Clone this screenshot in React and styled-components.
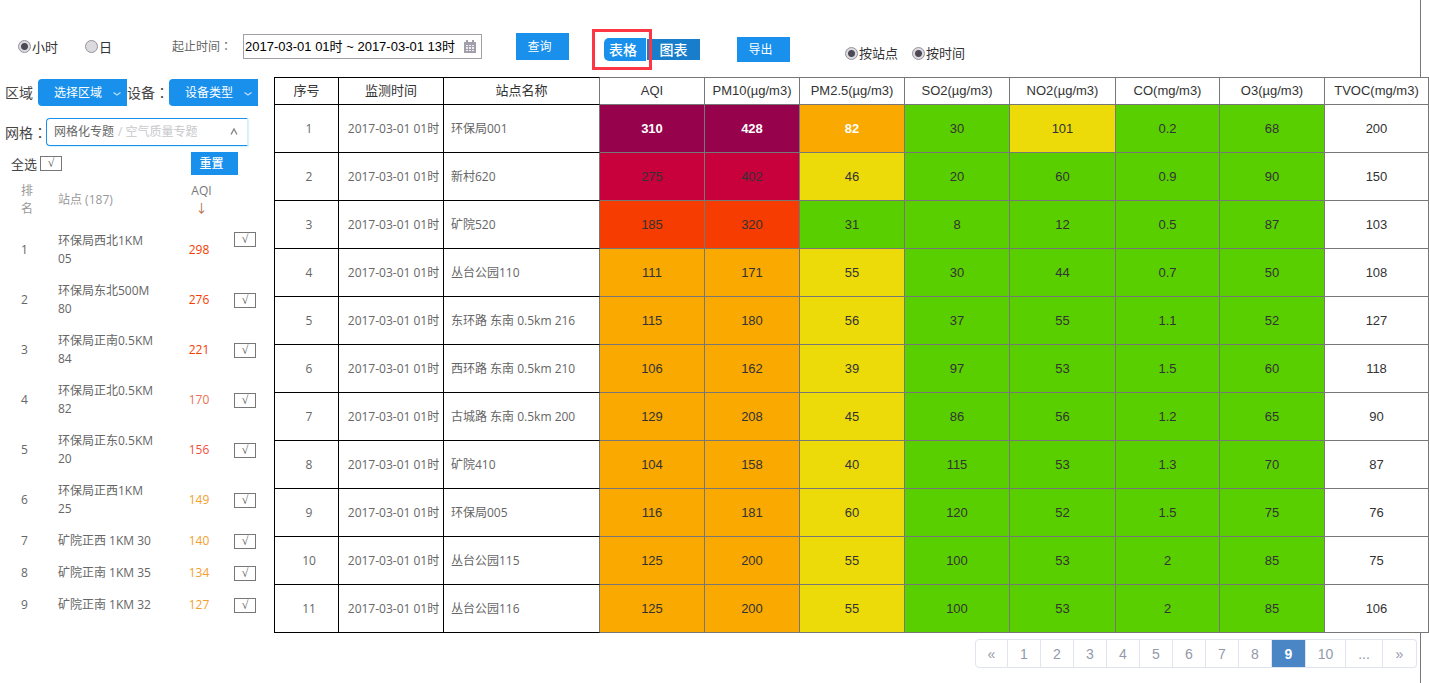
import React from 'react';
import styled, { createGlobalStyle } from 'styled-components';

const COLORS = {
    purple: '#96024b',
    crimson: '#c8003c',
    red: '#f63c00',
    orange: '#f9a900',
    yellow: '#ecdb09',
    green: '#5acf00',
    blue: '#1890ec',
};

const columns = [
    { name: '序号', width: 65 },
    { name: '监测时间', width: 105 },
    { name: '站点名称', width: 156 },
    { name: 'AQI', width: 105 },
    { name: 'PM10(µg/m3)', width: 95 },
    { name: 'PM2.5(µg/m3)', width: 105 },
    { name: 'SO2(µg/m3)', width: 105 },
    { name: 'NO2(µg/m3)', width: 106 },
    { name: 'CO(mg/m3)', width: 104 },
    { name: 'O3(µg/m3)', width: 105 },
    { name: 'TVOC(mg/m3)', width: 104 },
];

const records = [
    { site: '环保局001', values: [310, 428, 82, 30, 101, 0.2, 68, 200], levels: ['purple', 'purple', 'orange', 'green', 'yellow'] },
    { site: '新村620', values: [275, 402, 46, 20, 60, 0.9, 90, 150], levels: ['crimson', 'crimson', 'yellow'] },
    { site: '矿院520', values: [185, 320, 31, 8, 12, 0.5, 87, 103], levels: ['red', 'red', 'green'] },
    { site: '丛台公园110', values: [111, 171, 55, 30, 44, 0.7, 50, 108] },
    { site: '东环路 东南 0.5km 216', values: [115, 180, 56, 37, 55, 1.1, 52, 127] },
    { site: '西环路 东南 0.5km 210', values: [106, 162, 39, 97, 53, 1.5, 60, 118] },
    { site: '古城路 东南 0.5km 200', values: [129, 208, 45, 86, 56, 1.2, 65, 90] },
    { site: '矿院410', values: [104, 158, 40, 115, 53, 1.3, 70, 87] },
    { site: '环保局005', values: [116, 181, 60, 120, 52, 1.5, 75, 76] },
    { site: '丛台公园115', values: [125, 200, 55, 100, 53, 2, 85, 75] },
    { site: '丛台公园116', values: [125, 200, 55, 100, 53, 2, 85, 106] },
];

const defaultLevels = ['orange', 'orange', 'yellow', 'green', 'green', 'green', 'green'];

const ranking = [
    { name: '环保局西北1KM 05', aqi: 298, color: '#f63c00' },
    { name: '环保局东北500M 80', aqi: 276, color: '#f63c00' },
    { name: '环保局正南0.5KM 84', aqi: 221, color: '#f63c00' },
    { name: '环保局正北0.5KM 82', aqi: 170, color: '#ee6f52' },
    { name: '环保局正东0.5KM 20', aqi: 156, color: '#f2503c' },
    { name: '环保局正西1KM 25', aqi: 149, color: '#f2a02c' },
    { name: '矿院正西 1KM 30', aqi: 140, color: '#f2a02c' },
    { name: '矿院正南 1KM 35', aqi: 134, color: '#f2a02c' },
    { name: '矿院正南 1KM 32', aqi: 127, color: '#f2a02c' },
];

const pages = ['«', '1', '2', '3', '4', '5', '6', '7', '8', '9', '10', '...', '»'];
const pageWidths = { 9: 34, 10: 40, '...': 37, '»': 34 };

function Chevron({ up }){
    return (
        <svg width="8" height="8" viewBox="0 0 8 8" fill="none" stroke="currentColor" strokeWidth="1.4" aria-hidden="true">
            <path d={up ? 'M1 6.5L4 1L7 6.5' : 'M0.5 2.5L4 5L7.5 2.5'}/>
        </svg>
    )
}

function CalendarIcon(){
    return (
        <svg width="12" height="13" viewBox="0 0 12 13" aria-hidden="true">
            <path d="M0 2H12V13H0Z M2 0H4V3H2Z M8 0H10V3H8Z" fill="#a29fab"/>
            <path d="M2 5H10V11H2Z" fill="#efeef2"/>
            <path d="M2 6.5H10M2 9.5H10M4.5 5V11M7.5 5V11" stroke="#a29fab"/>
        </svg>
    )
}

function Tick({ label }){
    return (
        <TickStyled>
            <input type="checkbox" defaultChecked aria-label={label}/>
            <span>√</span>
        </TickStyled>
    )
}

function Toolbar(){
    return (
        <ToolbarStyled>
            <ToolGroup $height={35}>
                <RadioLabel $space={27}><input type="radio" name="unit" defaultChecked/>小时</RadioLabel>
                <RadioLabel $space={60}><input type="radio" name="unit"/>日</RadioLabel>
                <RangeLabel htmlFor="range">起止时间<Colon>：</Colon></RangeLabel>
                <RangeBox>
                    <input id="range" type="text" defaultValue="2017-03-01 01时 ~ 2017-03-01 13时"/>
                    <CalendarIcon/>
                </RangeBox>
                <Button $width={53} $height={27}>查询</Button>
            </ToolGroup>
            <ToolGroup $height={41}>
                <Highlight><ViewButton $active>表格</ViewButton></Highlight>
                <ViewButton>图表</ViewButton>
            </ToolGroup>
            <ToolGroup $height={41}>
                <Button $width={53} $height={25}>导出</Button>
            </ToolGroup>
            <ToolGroup $height={48}>
                <RadioLabel $space={14}><input type="radio" name="site" defaultChecked/>按站点</RadioLabel>
                <RadioLabel><input type="radio" name="time" defaultChecked/>按时间</RadioLabel>
            </ToolGroup>
        </ToolbarStyled>
    )
}

function Sidebar(){
    return (
        <SidebarStyled>
            <FilterRow>
                <FilterLabel $width={33} htmlFor="area">区域</FilterLabel>
                <Picker>
                    <select id="area"><option>选择区域</option></select>
                    <Chevron/>
                </Picker>
                <FilterLabel $width={42} htmlFor="device">设备<Colon>：</Colon></FilterLabel>
                <Picker>
                    <select id="device"><option>设备类型</option></select>
                    <Chevron/>
                </Picker>
            </FilterRow>
            <FilterRow>
                <FilterLabel $width={41} htmlFor="grid">网格<Colon>：</Colon></FilterLabel>
                <Cascader id="grid" type="button" aria-haspopup="listbox">
                    <span>网格化专题</span>
                    <em>/ 空气质量专题</em>
                    <Chevron up/>
                </Cascader>
            </FilterRow>
            <SelectAll>
                <span>全选</span>
                <Tick label="全选"/>
                <Button $width={47} $height={23}>重置</Button>
            </SelectAll>
            <RankTable>
                <colgroup>
                    <col width="58"/>
                    <col width="119"/>
                    <col width="44"/>
                    <col width="53"/>
                </colgroup>
                <thead>
                    <tr>
                        <th>排名</th>
                        <th>站点 (187)</th>
                        <SortCell>AQI<span>↓</span></SortCell>
                        <td/>
                    </tr>
                </thead>
                <tbody>
                    {ranking.map((item, i) => (
                        <tr key={item.name}>
                            <td>{i + 1}</td>
                            <td>{item.name}</td>
                            <AqiCell $color={item.color}>{item.aqi}</AqiCell>
                            <TickCell $top={i === 0}><Tick label={item.name}/></TickCell>
                        </tr>
                    ))}
                </tbody>
            </RankTable>
        </SidebarStyled>
    )
}

function DataGrid(){
    return (
        <GridTable>
            <colgroup>
                {columns.map(col => <col key={col.name} width={col.width}/>)}
            </colgroup>
            <thead>
                <tr>
                    {columns.map((col, i) => <HeadCell key={col.name} $index={i}>{col.name}</HeadCell>)}
                </tr>
            </thead>
            <tbody>
                {records.map((row, i) => (
                    <tr key={row.site}>
                        <InfoCell>{i + 1}</InfoCell>
                        <InfoCell>2017-03-01 01时</InfoCell>
                        <SiteCell>{row.site}</SiteCell>
                        {row.values.map((value, j) => (
                            <ValueCell
                                key={columns[j + 3].name}
                                $level={(row.levels && row.levels[j]) || defaultLevels[j]}
                                $plain={j === 7}
                                $strong={i === 0 && j < 3}
                            >
                                {value}
                            </ValueCell>
                        ))}
                    </tr>
                ))}
            </tbody>
        </GridTable>
    )
}

function App(){
    return (
        <Page>
            <GlobalStyle/>
            <Toolbar/>
            <Content>
                <Sidebar/>
                <Main>
                    <DataGrid/>
                    <Pagination aria-label="分页">
                        {pages.map(page => (
                            <PageButton key={page} $width={pageWidths[page] || 33} $active={page === '9'}>{page}</PageButton>
                        ))}
                    </Pagination>
                </Main>
            </Content>
        </Page>
    )
}

const GlobalStyle = createGlobalStyle`
    *{
        box-sizing: border-box;
    }
    body{
        margin: 0;
        background: #fff;
        color: #444;
        font-family: "Open Sans", "Noto Sans CJK SC", sans-serif;
        font-size: 12px;
        line-height: 18px;
    }
    button, input, select{
        font: inherit;
    }
    button{
        padding: 0;
        border: none;
        cursor: pointer;
    }
`;

const Page = styled.div`
    min-height: 100vh;
    margin-right: 8px;
    border-right: 1px solid #777;
`;

const ToolbarStyled = styled.div`
    display: flex;
    align-items: flex-start;
    height: 77px;
    padding: 29px 0 0 18px;
`;

const ToolGroup = styled.div`
    display: flex;
    align-items: center;
    height: ${props => props.$height}px;

    & + &{
        margin-left: 23px;
    }
    & + & + &{
        margin-left: 37px;
    }
    & + & + & + &{
        margin-left: 55px;
    }
`;

const RadioLabel = styled.label`
    display: flex;
    align-items: center;
    gap: 1px;
    margin-right: ${props => props.$space || 0}px;
    color: #333;
    font-size: 13px;

    input{
        appearance: none;
        width: 13px;
        height: 13px;
        margin: 0;
        border: 1px solid #94919b;
        border-radius: 50%;
        background: #dcdadf;
    }
    input:checked{
        background: radial-gradient(circle, #4c4955 0 3px, #dcdadf 4px);
    }
`;

/* the traditional face sets the full-width colon in the middle */
const Colon = styled.span`
    font-family: "Noto Sans CJK TC", sans-serif;
`;

const RangeLabel = styled.label`
    width: 71px;
    color: #666;
`;

const RangeBox = styled.div`
    display: flex;
    align-items: center;
    width: 239px;
    height: 25px;
    margin-right: 34px;
    padding-right: 5px;
    border: 1px solid #a29fab;

    input{
        flex: 1;
        min-width: 0;
        padding: 0 1px;
        border: none;
        outline: none;
        color: #000;
        font-family: "Liberation Sans", "Noto Sans CJK SC", sans-serif;
        font-size: 13px;
    }
`;

const Button = styled.button`
    width: ${props => props.$width}px;
    height: ${props => props.$height}px;
    padding-right: 6px;
    background: ${COLORS.blue};
    color: #fff;
`;

const Highlight = styled.div`
    position: relative;
    z-index: 1;
    display: flex;
    align-items: center;
    height: 41px;
    margin-right: -5px;
    padding: 0 3px 0 9px;
    border: 3px solid #fc3644;
`;

const ViewButton = styled.button`
    width: ${props => props.$active ? 42 : 53}px;
    height: ${props => props.$active ? 23 : 21}px;
    padding-right: ${props => props.$active ? 4 : 0}px;
    border-radius: ${props => props.$active ? '5px 0 0 5px' : 0};
    background: ${props => props.$active ? COLORS.blue : '#187dca'};
    color: #fff;
    font-size: 14px;
    font-weight: 500;
`;

const Content = styled.div`
    display: flex;
    align-items: flex-start;
`;

const SidebarStyled = styled.aside`
    flex: none;
    width: 274px;
    padding-top: 2px;
`;

const FilterRow = styled.div`
    display: flex;
    align-items: center;
    margin-bottom: 12px;
    padding-left: 5px;
`;

const FilterLabel = styled.label`
    flex: none;
    width: ${props => props.$width}px;
    font-size: 14px;
    white-space: nowrap;
`;

const Picker = styled.div`
    position: relative;
    width: 89px;

    select{
        display: block;
        appearance: none;
        width: 100%;
        height: 27px;
        padding: 0 0 0 16px;
        border: none;
        border-radius: 4px 0 0 4px;
        background: ${COLORS.blue};
        color: #fff;
    }
    svg{
        position: absolute;
        top: 11px;
        right: 6px;
        color: #b9dcfa;
        pointer-events: none;
    }
`;

const Cascader = styled.button`
    display: flex;
    align-items: center;
    gap: 4px;
    width: 202px;
    height: 28px;
    padding: 0 9px 0 7px;
    border: 1px solid ${COLORS.blue};
    border-right-color: #d5eefa;
    border-radius: 4px 0 0 4px;
    background: #fff;
    box-shadow: 1px 1px 1px #d5f2fa;
    color: #666;

    em{
        color: #c8c8cc;
        font-style: normal;
    }
    svg{
        margin-left: auto;
        color: #888;
    }
`;

const SelectAll = styled.div`
    display: flex;
    align-items: center;
    gap: 3px;
    margin-top: -6px;
    padding: 0 36px 0 11px;
    font-size: 13px;

    button{
        margin-left: auto;
        font-size: 12px;
        font-weight: 500;
    }
`;

const TickStyled = styled.label`
    position: relative;
    display: block;
    width: 22px;
    height: 15px;
    border: 1px solid #777;
    color: #555;
    font-family: "Liberation Serif", serif;
    font-size: 12px;
    line-height: 12px;
    text-align: center;

    input{
        position: absolute;
        opacity: 0;
        margin: 0;
    }
    input:not(:checked) + span{
        visibility: hidden;
    }
`;

const RankTable = styled.table`
    width: 100%;
    table-layout: fixed;
    border-collapse: collapse;
    color: #666;

    th, td{
        padding: 7px 0;
        font-weight: 400;
        text-align: left;
    }
    th:first-child, td:first-child{
        padding-left: 21px;
        padding-right: 24px;
    }
    th:nth-child(2), td:nth-child(2){
        padding-right: 20px;
    }
    thead th{
        color: #999;
    }
`;

const SortCell = styled.th`
    && {
        padding-left: 5px;
        color: #777;
        text-align: center;
    }
    span{
        display: block;
        color: #b5653a;
    }
`;

const AqiCell = styled.td`
    && {
        color: ${props => props.$color};
        text-align: center;
    }
`;

const TickCell = styled.td`
    && {
        padding-left: 13px;
        vertical-align: ${props => props.$top ? 'top' : 'middle'};
    }
`;

const Main = styled.main`
    flex: 1;
    min-width: 0;
    margin-right: -9px;
`;

const GridTable = styled.table`
    width: 100%;
    table-layout: fixed;
    border-collapse: separate;
    border-spacing: 0;
    background: #fff;

    th, td{
        padding: 0;
        border: 0 solid #000;
        border-width: 0 1px 1px 0;
        text-align: center;
        white-space: nowrap;
    }
    th:first-child, td:first-child{
        border-left-width: 1px;
    }
    th:nth-child(3), td:nth-child(3){
        border-right-color: #777;
    }
    td{
        height: 48px;
    }
`;

const HeadCell = styled.th`
    && {
        height: 28px;
        border-top-width: 1px;
        border-color: ${props => props.$index > 2 ? '#777' : '#000'};
        color: #333;
        font-family: "Liberation Sans", "Noto Sans CJK SC", sans-serif;
        font-size: 13px;
        font-weight: 400;
    }
`;

const InfoCell = styled.td`
    && {
        padding-left: 5px;
        color: #666;
    }
`;

const SiteCell = styled.td`
    && {
        padding-left: 7px;
        color: #666;
        text-align: left;
    }
`;

const ValueCell = styled.td`
    && {
        border-color: #777;
        background: ${props => props.$plain ? '#fff' : COLORS[props.$level]};
        color: ${props => props.$strong ? '#fff' : '#333'};
        font-family: "Liberation Sans", sans-serif;
        font-size: 13px;
        font-weight: ${props => props.$strong ? 700 : 400};
    }
`;

const Pagination = styled.nav`
    display: flex;
    justify-content: flex-end;
    padding: 6px 12px 0 0;
`;

const PageButton = styled.button`
    width: ${props => props.$width}px;
    height: 29px;
    border: 1px solid #dfe4ee;
    border-left-width: 0;
    background: ${props => props.$active ? '#4a86c5' : '#fff'};
    color: ${props => props.$active ? '#fff' : '#9499aa'};
    font-family: "Liberation Sans", sans-serif;
    font-size: 14px;
    font-weight: ${props => props.$active ? 700 : 400};

    &:first-child{
        border-left-width: 1px;
        border-radius: 4px 0 0 4px;
    }
    &:last-child{
        border-radius: 0 4px 4px 0;
    }
`;

export default App;
